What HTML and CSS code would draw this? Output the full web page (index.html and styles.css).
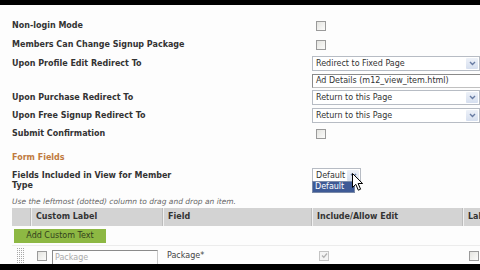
FILE: index.html
```html
<!DOCTYPE html>
<html>
<head>
<meta charset="utf-8">
<link rel="stylesheet" href="styles.css">
</head>
<body>
<div class="screen">
  <div class="bar top"></div>
  <div class="content">
    <div class="row r1"><span class="lbl">Non-login Mode</span><span class="val"><span class="cb"></span></span></div>
    <div class="row r2"><span class="lbl">Members Can Change Signup Package</span><span class="val"><span class="cb"></span></span></div>
    <div class="row r3"><span class="lbl">Upon Profile Edit Redirect To</span><span class="val"><span class="sel"><span class="seltext">Redirect to Fixed Page</span><span class="arrow"><svg width="9" height="7" viewBox="0 0 9 7"><path d="M2 2 L4.5 4.5 L7 2" fill="none" stroke="#687ca3" stroke-width="1.4"/></svg></span></span></span></div>
    <div class="row r3b"><span class="lbl"></span><span class="val"><span class="inp">Ad Details (m12_view_item.html)</span></span></div>
    <div class="row r4"><span class="lbl">Upon Purchase Redirect To</span><span class="val"><span class="sel"><span class="seltext">Return to this Page</span><span class="arrow"><svg width="9" height="7" viewBox="0 0 9 7"><path d="M2 2 L4.5 4.5 L7 2" fill="none" stroke="#687ca3" stroke-width="1.4"/></svg></span></span></span></div>
    <div class="row r5"><span class="lbl">Upon Free Signup Redirect To</span><span class="val"><span class="sel"><span class="seltext">Return to this Page</span><span class="arrow"><svg width="9" height="7" viewBox="0 0 9 7"><path d="M2 2 L4.5 4.5 L7 2" fill="none" stroke="#687ca3" stroke-width="1.4"/></svg></span></span></span></div>
    <div class="row r6"><span class="lbl">Submit Confirmation</span><span class="val"><span class="cb"></span></span></div>
    <div class="section">Form Fields</div>
    <div class="row r7"><span class="lbl narrow">Fields Included in View for Member Type</span><span class="val"><span class="dd"><span class="sel small"><span class="seltext">Default</span><span class="arrow"><svg width="9" height="7" viewBox="0 0 9 7"><path d="M2 2 L4.5 4.5 L7 2" fill="none" stroke="#687ca3" stroke-width="1.4"/></svg></span></span><span class="ddlist"><span class="opt">Default</span></span><svg class="cursor" width="12" height="19" viewBox="0 0 12 19"><path d="M0.5 0.5 L0.5 14.5 L3.8 11.3 L6.3 17.2 L8.6 16.2 L6.1 10.5 L10.6 10.5 Z" fill="#fff" stroke="#000" stroke-width="1"/></svg></span></span></div>
    <div class="hint">Use the leftmost (dotted) column to drag and drop an item.</div>
    <div class="table">
      <div class="thead">
        <span class="th c1"></span>
        <span class="th c2">Custom Label</span>
        <span class="th c3">Field</span>
        <span class="th c4">Include/Allow Edit</span>
        <span class="th c5">Lab</span>
      </div>
      <div class="btnrow"><span class="btn">Add Custom Text</span></div>
      <div class="trow">
        <span class="td c1"><svg class="grip" width="8" height="15" viewBox="0 0 8 15">
          <defs><pattern id="dots" width="2" height="2" patternUnits="userSpaceOnUse"><rect x="0" y="0" width="1" height="1" fill="#a8a8a8"/></pattern></defs>
          <rect x="0" y="0" width="8" height="15" fill="url(#dots)"/></svg></span>
        <span class="td c2"><span class="cb"></span><span class="tinp">Package</span></span>
        <span class="td c3">Package*</span>
        <span class="td c4"><span class="cb checked"><svg width="7" height="7" viewBox="0 0 7 7"><path d="M1 3.5 L2.8 5.3 L6 1.5" fill="none" stroke="#b0b0b0" stroke-width="1.3"/></svg></span></span>
        <span class="td c5"><span class="cb"></span></span>
      </div>
    </div>
  </div>
  <div class="bar bottom"></div>
</div>
</body>
</html>
```

FILE: styles.css
```css
html, body {
  margin: 0;
  padding: 0;
  background: #000;
}
.screen {
  width: 480px;
  height: 270px;
  overflow: hidden;
  display: flex;
  flex-direction: column;
  font-family: "DejaVu Sans", Verdana, sans-serif;
  color: #333;
}
.bar.top { height: 5px; background: #000; flex: none; }
.bar.bottom { height: 6px; background: #000; flex: none; }
.content {
  flex: 1;
  background: #fdfdfd;
  overflow: hidden;
  padding-top: 12px;
}
.row {
  display: grid;
  grid-template-columns: 300px 180px;
  align-items: center;
  padding-left: 12px;
}
.lbl {
  font-size: 8px;
  font-weight: bold;
  color: #333;
  line-height: 10px;
}
.lbl.narrow { width: 180px; align-self: start; padding-top: 1px; }
.val { display: flex; align-items: center; }
.r1 { height: 18.5px; }
.r2 { height: 19px; }
.r3 { height: 18px; }
.r3b { height: 16px; }
.r4 { height: 18px; }
.r5 { height: 18px; }
.r6 { height: 18px; }
.r7 { height: 22px; align-items: start; }
.r7 .val { margin-top: -2px; }
.cb {
  width: 8px;
  height: 8px;
  border: 1px solid #9a9a9a;
  background: linear-gradient(135deg, #e4e4e0, #fbfbfa);
  margin-left: 4px;
  display: inline-flex;
  align-items: center;
  justify-content: center;
  flex: none;
}
.sel {
  width: 166px;
  height: 13px;
  border: 1px solid #b7bcc4;
  background: #fff;
  display: flex;
  align-items: center;
  justify-content: space-between;
}
.seltext {
  font-size: 8px;
  padding-left: 3px;
  color: #333;
  white-space: nowrap;
}
.arrow {
  width: 12px;
  height: 11px;
  margin-right: 1px;
  background: linear-gradient(#edf1f8, #d6dfef);
  border-radius: 1px;
  display: flex;
  align-items: center;
  justify-content: center;
}
.inp {
  width: 165px;
  height: 12px;
  border: 1px solid #c0c0c0;
  border-top-color: #8a8a8a;
  border-left-color: #8a8a8a;
  font-size: 8px;
  padding-left: 3px;
  line-height: 12px;
  white-space: nowrap;
  background: #fff;
}
.section {
  font-size: 8px;
  font-weight: bold;
  color: #c07a40;
  padding-left: 12px;
  height: 10px;
  line-height: 10px;
  margin-top: 10px;
  margin-bottom: 7px;
}
.dd { position: relative; display: block; }
.sel.small { width: 47px; }
.ddlist {
  position: absolute;
  left: 0;
  top: 13px;
  width: 41px;
  height: 10px;
  border: 1px solid #7a8aa8;
  background: #fff;
  display: flex;
}
.opt {
  flex: 1;
  background: #3e5a96;
  color: #fff;
  font-size: 8px;
  line-height: 10px;
  padding-left: 2px;
}
.cursor {
  position: absolute;
  left: 40px;
  top: 5px;
}
.hint {
  font-size: 7.5px;
  font-style: italic;
  color: #666;
  padding-left: 12px;
  height: 10px;
  line-height: 10px;
  margin-top: 5px;
  white-space: nowrap;
}
.table {
  margin-top: 1px;
  margin-left: 12px;
}
.thead {
  display: grid;
  grid-template-columns: 18px 132px 149px 151px 40px;
  height: 18px;
  background: #d3d3d3;
}
.th {
  font-size: 8px;
  font-weight: bold;
  color: #333;
  line-height: 18px;
  padding-left: 5px;
  white-space: nowrap;
  overflow: hidden;
}
.th.c1 { padding-left: 0; }
.th.c2, .th.c3, .th.c4, .th.c5 {
  border-left: 1px solid #bdbdbd;
  box-shadow: inset 1px 0 #f0f0f0;
}
.btnrow {
  height: 19px;
  display: flex;
  align-items: flex-start;
  padding-top: 3px;
  box-sizing: border-box;
  padding-left: 2px;
}
.btn {
  width: 92px;
  height: 14px;
  background: #8db843;
  font-size: 8px;
  color: #33401c;
  line-height: 14px;
  text-align: center;
}
.trow {
  display: grid;
  grid-template-columns: 18px 132px 149px 151px 40px;
  height: 18px;
  border-top: 1px solid #ececec;
  align-items: center;
}
.td {
  font-size: 8px;
  color: #444;
  white-space: nowrap;
  display: flex;
  align-items: center;
}
.td.c1 { padding-left: 5px; }
.td.c2 { padding-left: 3px; }
.td.c2 .cb { margin-left: 4px; }
.td.c3 { padding-left: 5px; }
.td.c4 { padding-left: 4px; }
.td.c5 { padding-left: 3px; }
.td.c4 .cb, .td.c5 .cb { margin-left: 4px; }
.cb.checked { border-color: #c4c4c4; background: #f4f4f4; }
.grip { display: block; }
.tinp {
  width: 102px;
  height: 14px;
  margin-left: 5px;
  border: 1px solid #c8c8c8;
  border-top-color: #8a8a8a;
  border-left-color: #8a8a8a;
  color: #aaa;
  font-size: 8px;
  line-height: 14px;
  padding-left: 2px;
  margin-top: 4px;
}
```
